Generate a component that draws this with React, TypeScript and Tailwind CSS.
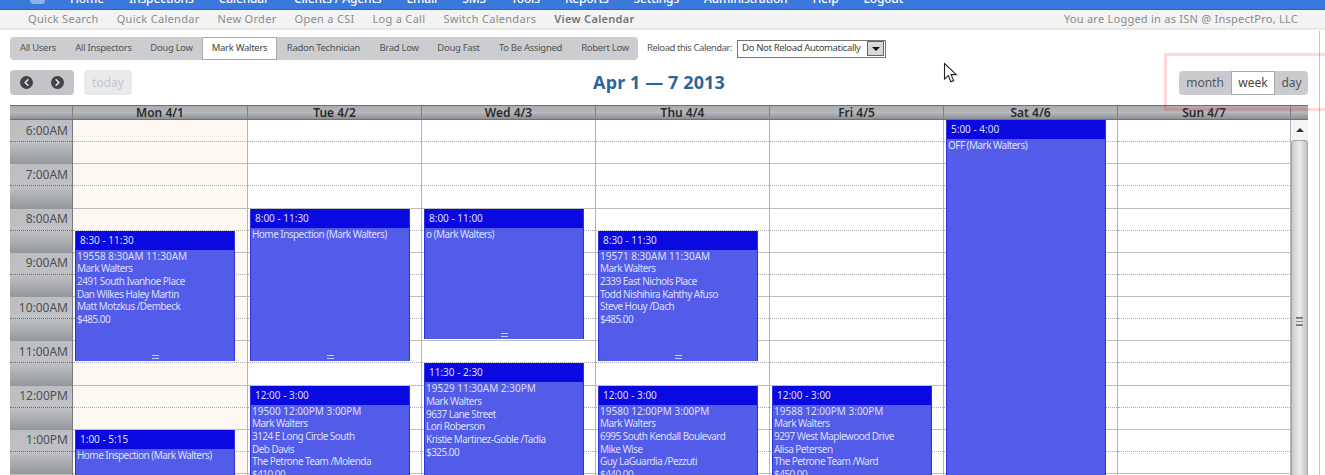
import { ChevronLeft, ChevronRight } from "lucide-react";

const topNav = [
  "Home",
  "Inspections",
  "Calendar",
  "Clients / Agents",
  "Email",
  "SMS",
  "Tools",
  "Reports",
  "Settings",
  "Administration",
  "Help",
  "Logout",
];

const subNav = ["Quick Search", "Quick Calendar", "New Order", "Open a CSI", "Log a Call", "Switch Calendars"];

const tabs = [
  { name: "All Users", width: "w-[56px]" },
  { name: "All Inspectors", width: "w-[75px]" },
  { name: "Doug Low", width: "w-[61px]" },
  { name: "Mark Walters", width: "w-[75px]", active: true },
  { name: "Radon Technician", width: "w-[93px]" },
  { name: "Brad Low", width: "w-[58px]" },
  { name: "Doug Fast", width: "w-[61px]" },
  { name: "To Be Assigned", width: "w-[83px]" },
  { name: "Robert Low", width: "w-[66px]" },
];

const hours = ["6:00AM", "7:00AM", "8:00AM", "9:00AM", "10:00AM", "11:00AM", "12:00PM", "1:00PM", "2:00PM"];

const rowHeight = 44.25;

type CalEvent = { start: number; end: number; time: string; lines: string[]; grip?: boolean };

const days: { label: string; width: string; today?: boolean; events: CalEvent[] }[] = [
  {
    label: "Mon 4/1",
    width: "w-[175px]",
    today: true,
    events: [
      {
        start: 2.5,
        end: 5.45,
        time: "8:30 - 11:30",
        grip: true,
        lines: [
          "19558 8:30AM 11:30AM",
          "Mark Walters",
          "2491 South Ivanhoe Place",
          "Dan Wilkes Haley Martin",
          "Matt Motzkus /Dembeck",
          "$485.00",
        ],
      },
      { start: 7, end: 11, time: "1:00 - 5:15", lines: ["Home Inspection (Mark Walters)"] },
    ],
  },
  {
    label: "Tue 4/2",
    width: "w-[174px]",
    events: [
      { start: 2, end: 5.45, time: "8:00 - 11:30", grip: true, lines: ["Home Inspection (Mark Walters)"] },
      {
        start: 6,
        end: 9,
        time: "12:00 - 3:00",
        lines: [
          "19500 12:00PM 3:00PM",
          "Mark Walters",
          "3124 E Long Circle South",
          "Deb Davis",
          "The Petrone Team /Molenda",
          "$410.00",
        ],
      },
    ],
  },
  {
    label: "Wed 4/3",
    width: "w-[174px]",
    events: [
      { start: 2, end: 4.96, time: "8:00 - 11:00", grip: true, lines: ["o (Mark Walters)"] },
      {
        start: 5.5,
        end: 9,
        time: "11:30 - 2:30",
        lines: [
          "19529 11:30AM 2:30PM",
          "Mark Walters",
          "9637 Lane Street",
          "Lori Roberson",
          "Kristie Martinez-Goble /Tadla",
          "$325.00",
        ],
      },
    ],
  },
  {
    label: "Thu 4/4",
    width: "w-[174px]",
    events: [
      {
        start: 2.5,
        end: 5.45,
        time: "8:30 - 11:30",
        grip: true,
        lines: [
          "19571 8:30AM 11:30AM",
          "Mark Walters",
          "2339 East Nichols Place",
          "Todd Nishihira Kahthy Afuso",
          "Steve Houy /Dach",
          "$485.00",
        ],
      },
      {
        start: 6,
        end: 9,
        time: "12:00 - 3:00",
        lines: [
          "19580 12:00PM 3:00PM",
          "Mark Walters",
          "6995 South Kendall Boulevard",
          "Mike Wise",
          "Guy LaGuardia /Pezzuti",
          "$440.00",
        ],
      },
    ],
  },
  {
    label: "Fri 4/5",
    width: "w-[174px]",
    events: [
      {
        start: 6,
        end: 9,
        time: "12:00 - 3:00",
        lines: [
          "19588 12:00PM 3:00PM",
          "Mark Walters",
          "9297 West Maplewood Drive",
          "Alisa Petersen",
          "The Petrone Team /Ward",
          "$450.00",
        ],
      },
    ],
  },
  {
    label: "Sat 4/6",
    width: "w-[174px]",
    events: [{ start: 0, end: 12, time: "5:00 - 4:00", lines: ["OFF (Mark Walters)"] }],
  },
  { label: "Sun 4/7", width: "w-[173px]", events: [] },
];

function EventBox({ event }: { event: CalEvent }) {
  return (
    <div
      className="absolute left-[2px] w-[160px] overflow-hidden border-x border-[#2f34d8] bg-[#535ce8] text-[#dcdfff]"
      style={{ top: event.start * rowHeight, height: (event.end - event.start) * rowHeight }}
    >
      <div className="flex h-[19px] items-center bg-[#0a0ae0] pl-[4px] text-[10px]">{event.time}</div>
      <div className="pl-[1px] text-[10px] leading-[12.7px] whitespace-nowrap">
        {event.lines.map((line, i) => (
          <div key={line} className={i === 0 && /^\d/.test(line) ? "tracking-[0px]" : "tracking-[-0.55px]"}>
            {line}
          </div>
        ))}
      </div>
      {event.grip && (
        <div className="absolute bottom-[2px] left-[76px] h-[4px] w-[7px] border-y border-[#c9ccf8]" />
      )}
    </div>
  );
}

export default function App() {
  return (
    <div className="relative h-[475px] w-[1325px] overflow-hidden bg-white font-['Noto_Sans',sans-serif]">
      {/* top nav, cut off by the capture */}
      <div className="flex h-[9px] items-end gap-[25px] overflow-hidden bg-[#3b78dc] pl-[30px] text-[12px] leading-[14px] font-medium tracking-[-0.15px] text-white">
        <div className="h-[4px] w-[15px] shrink-0 self-start rounded-b-full bg-[#8fb2ea]" />
        {topNav.map((item) => (
          <span key={item} className="mb-[3px] shrink-0 whitespace-nowrap">
            {item}
          </span>
        ))}
      </div>
      <div className="h-px bg-[#2b62bd]" />

      {/* sub nav */}
      <div className="flex h-[18px] items-center justify-between bg-[#f3f3f3] pl-[28px] pr-[27px] text-[11px] tracking-[0.3px] text-[#8b8b8b]">
        <div className="flex gap-[18px]">
          {subNav.map((item) => (
            <span key={item}>{item}</span>
          ))}
          <span className="font-semibold text-[#737373]">View Calendar</span>
        </div>
        <span className="tracking-[0.25px]">You are Logged in as ISN @ InspectPro, LLC</span>
      </div>
      <div className="h-[3px] bg-gradient-to-b from-[#dedede] to-white" />

      <div className="h-[445px] w-[1320px] border-r border-[#c4c4c4] pl-[10px]">
        {/* user tabs and reload select */}
        <div className="flex items-center pt-[6px]">
          <div className="flex h-[23px] items-stretch rounded-[4px] bg-[#cbcdd0] text-[9.5px] tracking-[-0.3px] text-[#555]">
            {tabs.map((tab) => (
              <div
                key={tab.name}
                className={
                  tab.active
                    ? `${tab.width} flex items-center justify-center border border-[#a9a9a9] bg-white text-[#444]`
                    : `${tab.width} flex items-center justify-center`
                }
              >
                {tab.name}
              </div>
            ))}
          </div>
          <span className="ml-[9px] text-[9.5px] tracking-[-0.45px] text-[#555]">Reload this Calendar:</span>
          <div className="ml-[5px] flex h-[18px] w-[149px] items-center justify-between border border-[#777] bg-white pl-[4px] pr-px text-[9.5px] tracking-[-0.35px] text-[#444]">
            <span>Do Not Reload Automatically</span>
            <div className="flex h-[15px] w-[17px] items-center justify-center border border-[#666] bg-[#d8d8d8]">
              <div className="h-0 w-0 border-x-[4px] border-t-[4px] border-x-transparent border-t-[#111]" />
            </div>
          </div>
        </div>

        {/* calendar toolbar */}
        <div className="mt-[10px] flex h-[25px] w-[1298px] items-center justify-between">
          <div className="flex w-[250px] gap-[10px]">
            <div className="flex h-[25px] w-[64px] items-center justify-between rounded-[4px] bg-[#c2c4c7] px-[10px]">
              <div className="flex h-[13px] w-[13px] items-center justify-center rounded-full bg-[#444]">
                <ChevronLeft size={11} strokeWidth={3.5} className="text-[#e8e8e8]" />
              </div>
              <div className="flex h-[13px] w-[13px] items-center justify-center rounded-full bg-[#444]">
                <ChevronRight size={11} strokeWidth={3.5} className="text-[#e8e8e8]" />
              </div>
            </div>
            <div className="flex h-[25px] w-[48px] items-center justify-center rounded-[4px] bg-[#e9eaec] text-[12px] text-[#c6c7c9]">
              today
            </div>
          </div>
          <div className="text-[18px] font-bold tracking-[0.1px] text-[#2c6699]">Apr 1 — 7 2013</div>
          <div className="flex w-[250px] justify-end">
            <div className="flex h-[24px] items-stretch rounded-[4px] bg-[#c9cbce] text-[12px] text-[#555]">
              <div className="flex w-[52px] items-center justify-center">month</div>
              <div className="flex w-[44px] items-center justify-center border border-[#a9a9a9] bg-white text-[#444]">
                week
              </div>
              <div className="flex w-[33px] items-center justify-center">day</div>
            </div>
          </div>
        </div>

        {/* week grid */}
        <div className="mt-[10px] w-[1298px]">
          <div className="flex h-[15px] border-y border-[#6f7277] bg-gradient-to-b from-[#a9acb1] via-[#b6b8bc] to-[#8c8f94] text-[12px] leading-[13px] font-semibold text-[#2b2b2b]">
            <div className="w-[63px] border-r border-[#7d8085]" />
            {days.map((day) => (
              <div key={day.label} className={`${day.width} border-r border-[#7d8085] text-center`}>
                {day.label}
              </div>
            ))}
            <div className="flex-1" />
          </div>

          <div className="flex h-[355px] overflow-hidden">
            <div className="w-[63px] shrink-0 border-r border-[#777a7f]">
              {hours.map((hour) => (
                <div key={hour} className="flex h-[44.25px] flex-col bg-gradient-to-b from-[#bcbec1] via-[#bfc1c4] to-[#94979b]">
                  <div className="flex h-[22px] items-center justify-end border-b border-dotted border-[#66696e] pr-[4px] text-[12px] text-[#505050]">
                    {hour}
                  </div>
                </div>
              ))}
            </div>

            {days.map((day) => (
              <div
                key={day.label}
                className={
                  day.today
                    ? `${day.width} relative shrink-0 border-r border-[#b4b4b4] bg-[#fdf8f1]`
                    : `${day.width} relative shrink-0 border-r border-[#b4b4b4] bg-white`
                }
              >
                {hours.map((hour) => (
                  <div key={hour} className="h-[44.25px] border-b border-[#bdbdbd]">
                    <div className="h-[22px] border-b border-dotted border-[#adadad]" />
                  </div>
                ))}
                {day.events.map((event) => (
                  <EventBox key={event.time} event={event} />
                ))}
              </div>
            ))}

            {/* scrollbar */}
            <div className="flex w-[17px] shrink-0 flex-col">
              <div className="flex h-[20px] items-center justify-center bg-[#f5f5f5]">
                <div className="h-0 w-0 border-x-[4px] border-b-[4px] border-x-transparent border-b-[#333]" />
              </div>
              <div className="flex flex-1 flex-col items-center rounded-t-[3px] border-x border-t border-[#a6a6a6] bg-gradient-to-r from-[#c9c9c9] via-[#ececec] to-[#c4c4c4] pt-[176px]">
                <div className="h-[9px] w-[7px] border-y border-[#777] bg-[linear-gradient(#888_1px,transparent_1px)] bg-[length:100%_3px]" />
              </div>
            </div>
          </div>
        </div>
      </div>

      {/* video annotation and mouse cursor, both float over the page */}
      <div className="absolute left-[1164px] top-[53px] h-[58px] w-[170px] border-[3px] border-[#ff0000]/15" />
      <svg className="absolute left-[943px] top-[62px]" width="16" height="22" viewBox="0 0 16 22">
        <path d="M1.5 1.5V17l3.8-3.4 2.6 6.2 2.8-1.2-2.6-6h5.2z" fill="#fff" stroke="#222" strokeWidth="1.1" />
      </svg>
    </div>
  );
}
